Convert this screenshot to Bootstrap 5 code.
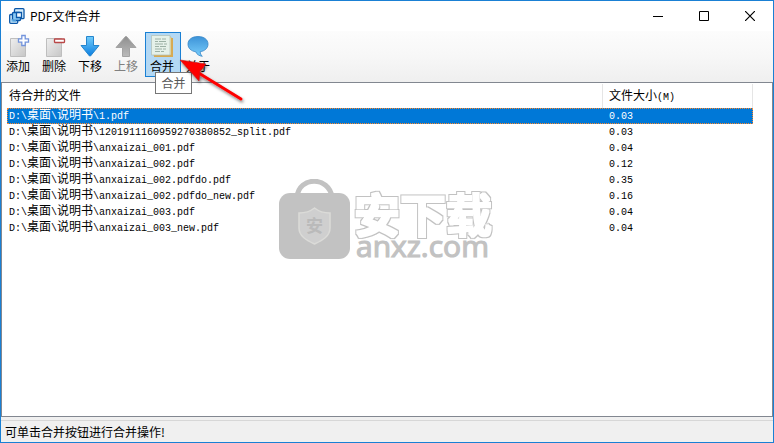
<!DOCTYPE html>
<html lang="zh-CN">
<head>
<meta charset="utf-8">
<meta name="viewport" content="width=device-width, initial-scale=1">
<title>PDF文件合并</title>
<link href="https://cdn.jsdelivr.net/npm/bootstrap@5.3.0/dist/css/bootstrap.min.css" rel="stylesheet">
<style>
body { font-family: "Noto Sans CJK SC", sans-serif; font-size: 12px; line-height: 16px; color: #000; }
.app { border: 1px solid #1a80d4; background: #f0f0f0; }
.titlebar { height: 30px; padding-left: 8px; }
.titlebar h1 { margin-left: 5px; font-size: 12px; line-height: 16px; }
.caption-btn { width: 46px; height: 28px; border: 0; background: none; padding: 0 1px 3px 0; }
.toolbar { height: 51px; padding: 1px 0 0 0; background: linear-gradient(#fcfcfc, #f7f7f7 50%, #efefef); }
.tool { width: 36px; height: 45px; padding: 1px 2px 0 0; border: 1px solid transparent; background: none; color: #000; }
.tool:disabled { color: #808080; }
.tool.current { background: #b3d8f4; border-color: #1a80d4; }
.tool svg { width: 24px; height: 24px; }
.tool span { line-height: 16px; white-space: nowrap; }
.tip { left: 10px; top: 40px; z-index: 3; width: 37px; height: 22px; line-height: 20px; background: #fff; border: 1px solid #767676; color: #575757; }
.pointer { left: 30px; top: 22px; z-index: 4; width: 76px; height: 54px; pointer-events: none; }
.listview { border: 1px solid #828790; background: #fff; padding: 1px 19px 0 5px; min-height: 0; }
.files { table-layout: fixed; border-collapse: separate; border-spacing: 0; font-family: "Liberation Mono", "Noto Sans CJK SC", monospace; font-size: 10px; }
.files .size { width: 150px; }
.files th { height: 24px; padding: 2px 0 0 2px; border-right: 1px solid #e5e5e5; font-weight: 400; }
.files td { height: 16px; padding: 0 0 0 2px; line-height: 12px; white-space: nowrap; vertical-align: baseline; }
.files th:last-child, .files td:last-child { padding-left: 6px; }
.files .han { font-family: "Noto Sans CJK SC", sans-serif; font-size: 12px; line-height: 12px; }
.files .picked { background: #0078d7; color: #fff; outline: 1px dotted #ff8728; outline-offset: -1px; }
.watermark { left: 36%; top: 96px; width: 216px; height: 96px; pointer-events: none; }
.statusbar { margin-top: 3px; height: 22px; border-top: 1px solid #d7d7d7; padding-left: 4px; background: #f0f0f0; }
</style>
</head>
<body>
<div class="app vh-100 d-flex flex-column overflow-hidden">
  <header class="titlebar bg-white d-flex align-items-center flex-shrink-0">
    <svg width="16" height="16" viewBox="0 0 16 16" fill="#d5edfc" stroke="#0b57a8" stroke-width="1.3" aria-hidden="true">
      <rect x="5.500" y=".7" width="9.500" height="10" rx="1"/><rect x=".7" y="6.500" width="8" height="8.800" rx="1"/><rect x="3.500" y="4.500" width="8" height="8" rx="1" fill="#8bcaf4"/><path d="M7.500 4.500h5v5h-5z" fill="#f2faff"/><path d="M3 11v2h4" fill="none" stroke="#69b5e9"/>
    </svg>
    <h1 class="mb-0 fw-normal flex-grow-1 text-truncate">PDF文件合并</h1>
    <button class="caption-btn" type="button" aria-label="最小化"><svg width="10" height="10"><path d="M0 5.500h10" stroke="#000"/></svg></button>
    <button class="caption-btn" type="button" aria-label="最大化"><svg width="10" height="10"><path d="M.5.5h9v9h-9z" fill="none" stroke="#000"/></svg></button>
    <button class="caption-btn" type="button" aria-label="关闭"><svg width="10" height="10"><path d="M0 0l10 10M10 0L0 10" stroke="#000" stroke-width="1.200"/></svg></button>
  </header>

  <nav class="toolbar d-flex flex-shrink-0" aria-label="工具栏">
    <svg width="0" height="0" class="position-absolute" aria-hidden="true">
      <defs>
        <linearGradient id="page" x2="1" y2="1"><stop stop-color="#efefef"/><stop offset="1" stop-color="#c6c6c6"/></linearGradient>
        <linearGradient id="blue" x2="0" y2="1"><stop stop-color="#72cdfb"/><stop offset="1" stop-color="#0b7ee0"/></linearGradient>
        <linearGradient id="gray" x2="0" y2="1"><stop stop-color="#8f8f8f"/><stop offset="1" stop-color="#bababa"/></linearGradient>
        <linearGradient id="bubble" x2="0" y2="1"><stop stop-color="#3d93d8"/><stop offset="1" stop-color="#78cdfb"/></linearGradient>
      </defs>
    </svg>
    <button class="tool d-flex flex-column align-items-center" type="button">
      <svg viewBox="0 0 24 24"><path d="M4.500 4.500h15v18h-15z" fill="url(#page)" stroke="#bebebe"/><path d="M15.800 1.500h3.400v3.300h3.300v3.400h-3.300v3.300h-3.400V8.200h-3.300V4.800h3.300z" fill="#fff" stroke="#7394dc" stroke-width="1.300"/></svg><span>添加</span>
    </button>
    <button class="tool d-flex flex-column align-items-center" type="button">
      <svg viewBox="0 0 24 24"><path d="M4.500 4.500h15v18h-15z" fill="url(#page)" stroke="#bebebe"/><rect x="12.500" y="5" width="10" height="3.500" rx=".5" fill="#fff" stroke="#b94747" stroke-width="1.300"/></svg><span>删除</span>
    </button>
    <button class="tool d-flex flex-column align-items-center" type="button">
      <svg viewBox="0 0 24 24"><path d="M8.500 2.500h7v9h5.500L12.500 22h-1L3 11.500h5.500z" fill="url(#blue)" stroke="#2585cd"/></svg><span>下移</span>
    </button>
    <button class="tool d-flex flex-column align-items-center" type="button" disabled>
      <svg viewBox="0 0 24 24"><path d="M8.500 22.500h7v-9h6.500L12.500 2.500h-1L2 13.500h6.500z" fill="url(#gray)" stroke="#a3a3a3"/></svg><span>上移</span>
    </button>
    <div class="position-relative">
      <button class="tool current d-flex flex-column align-items-center" type="button" aria-describedby="tip">
        <svg viewBox="0 0 24 24"><path d="M4 4h19v19H4z" fill="#d8aa50"/><path d="M3 3h18v18H3z" fill="#fff1b5" stroke="#d7ae61" stroke-width=".6"/><path d="M1.500 1.500h18.500v19.500H1.500z" fill="#e5f1e9" stroke="#afbfb4" stroke-width=".7"/><path d="M5 5h6m1 0h4M5 7.500h3m1 0h7M5 10h8m1 0h3M5 12.500h4m1 0h6M5 15h7m1 0h3M5 17.500h5m1 0h3" stroke="#93a99d" stroke-width=".9"/></svg><span>合并</span>
      </button>
      <div id="tip" class="tip position-absolute text-center" role="tooltip">合并</div>
      <svg class="pointer position-absolute" viewBox="0 0 76 54" aria-hidden="true">
        <defs><filter id="soft" x="-20%" y="-20%" width="140%" height="150%"><feDropShadow dx="1" dy="2" stdDeviation="1.500" flood-opacity=".5"/></filter></defs>
        <g filter="url(#soft)"><path d="M22 18L66 45" stroke="#fe0000" stroke-width="3" stroke-linecap="round"/><path d="M5 6L31 10 25 17.500 24 27z" fill="#fe0000" stroke="#b91c1c" stroke-width=".6"/></g>
      </svg>
    </div>
    <button class="tool d-flex flex-column align-items-center" type="button">
      <svg viewBox="0 0 24 24"><path d="M12 2.500c6.300 0 10 3.300 10 7.600 0 4.200-3.400 7-7.800 7.600 0 2 .8 3.300 2.100 4.600-3.400-.5-5.600-2-6.500-4.500C5.200 17.100 2 14.300 2 10.100c0-4.300 3.700-7.600 10-7.600z" fill="url(#bubble)" stroke="#3284c6" stroke-width=".8"/></svg><span>关于</span>
    </button>
  </nav>

  <main class="listview position-relative flex-grow-1 overflow-hidden">
    <table class="files w-100">
      <colgroup><col><col class="size"></colgroup>
      <thead><tr><th scope="col"><span class="han">待合并的文件</span></th><th scope="col"><span class="han">文件大小</span>(M)</th></tr></thead>
      <tbody>
        <tr class="picked"><td>D:\<span class="han">桌面</span>\<span class="han">说明书</span>\1.pdf</td><td>0.03</td></tr>
        <tr><td>D:\<span class="han">桌面</span>\<span class="han">说明书</span>\1201911160959270380852_split.pdf</td><td>0.03</td></tr>
        <tr><td>D:\<span class="han">桌面</span>\<span class="han">说明书</span>\anxaizai_001.pdf</td><td>0.04</td></tr>
        <tr><td>D:\<span class="han">桌面</span>\<span class="han">说明书</span>\anxaizai_002.pdf</td><td>0.12</td></tr>
        <tr><td>D:\<span class="han">桌面</span>\<span class="han">说明书</span>\anxaizai_002.pdfdo.pdf</td><td>0.35</td></tr>
        <tr><td>D:\<span class="han">桌面</span>\<span class="han">说明书</span>\anxaizai_002.pdfdo_new.pdf</td><td>0.16</td></tr>
        <tr><td>D:\<span class="han">桌面</span>\<span class="han">说明书</span>\anxaizai_003.pdf</td><td>0.04</td></tr>
        <tr><td>D:\<span class="han">桌面</span>\<span class="han">说明书</span>\anxaizai_003_new.pdf</td><td>0.04</td></tr>
      </tbody>
    </table>
    <svg class="watermark position-absolute" viewBox="0 0 216 96" role="img" aria-label="安下载 anxz.com">
      <defs>
        <filter id="outline" x="-5%" y="-5%" width="110%" height="110%" color-interpolation-filters="sRGB">
          <feMorphology in="SourceAlpha" operator="dilate" radius="2" result="outer"/>
          <feMorphology in="SourceAlpha" operator="dilate" radius="1" result="inner"/>
          <feFlood flood-color="#c2c2c2"/><feComposite in2="outer" operator="in" result="rim"/>
          <feFlood flood-color="#fff"/><feComposite in2="inner" operator="in" result="body"/>
          <feMerge><feMergeNode in="rim"/><feMergeNode in="body"/></feMerge>
        </filter>
      </defs>
      <path d="M18 18C20 -3 50 -3 53 18" fill="none" stroke="#c2c2c2" stroke-width="5"/>
      <rect y="14" width="71" height="66" rx="11" fill="#c2c2c2"/>
      <path d="M35.500 29c5 4 10 5 15.500 5v15c0 8-7 12-15.500 16C27 61 20 57 20 49V34c5.500 0 10.500-1 15.500-5z" fill="#cfcfcf" stroke="#dbdbd8" stroke-width="1.500"/>
      <text x="35.500" y="53" font-size="17" font-weight="700" text-anchor="middle" fill="#bababa" font-family="Noto Sans CJK SC">安</text>
      <text x="75" y="53" font-size="46" font-weight="700" fill="#fff" filter="url(#outline)" font-family="Noto Sans CJK SC">安下载</text>
      <text x="77" y="78" font-size="30" fill="#c2c2c2" stroke="#c2c2c2" stroke-width="1.200" font-family="Open Sans">anxz.com</text>
    </svg>
  </main>

  <footer class="statusbar d-flex align-items-center flex-shrink-0">可单击合并按钮进行合并操作!</footer>
</div>
<script src="https://cdn.jsdelivr.net/npm/bootstrap@5.3.0/dist/js/bootstrap.bundle.min.js"></script>
</body>
</html>
